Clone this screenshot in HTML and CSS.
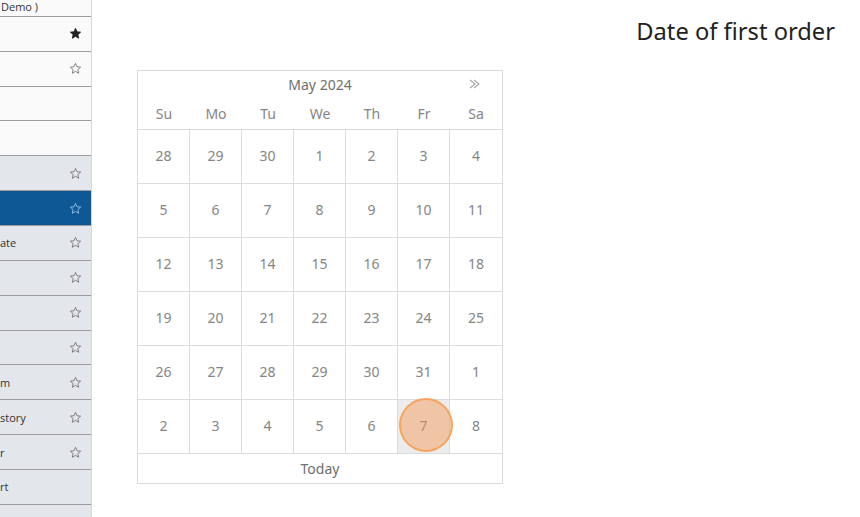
FILE: index.html
```html
<!DOCTYPE html>
<html lang="en">
<head>
  <meta charset="UTF-8">
  <title>Date of first order</title>
  <link rel="stylesheet" href="styles.css">
</head>
<body>
  <svg width="0" height="0" class="defs">
    <symbol id="star" viewBox="0 0 24 24">
      <polygon points="12,2.5 14.8,8.8 21.5,9.5 16.4,14 17.9,20.8 12,17.3 6.1,20.8 7.6,14 2.5,9.5 9.2,8.8"/>
    </symbol>
  </svg>

  <div class="layout">
    <!-- sidebar -->
    <aside class="sidebar">
      <div class="row light"><span class="label">Demo )</span></div>
      <div class="row light"><span class="label"></span><svg class="star filled"><use href="#star"/></svg></div>
      <div class="row light"><span class="label"></span><svg class="star"><use href="#star"/></svg></div>
      <div class="row light"><span class="label"></span></div>
      <div class="row light"><span class="label"></span></div>
      <div class="row"><span class="label"></span><svg class="star"><use href="#star"/></svg></div>
      <div class="row active"><span class="label"></span><svg class="star"><use href="#star"/></svg></div>
      <div class="row"><span class="label">ate</span><svg class="star"><use href="#star"/></svg></div>
      <div class="row"><span class="label"></span><svg class="star"><use href="#star"/></svg></div>
      <div class="row"><span class="label"></span><svg class="star"><use href="#star"/></svg></div>
      <div class="row"><span class="label"></span><svg class="star"><use href="#star"/></svg></div>
      <div class="row"><span class="label">m</span><svg class="star"><use href="#star"/></svg></div>
      <div class="row"><span class="label">story</span><svg class="star"><use href="#star"/></svg></div>
      <div class="row"><span class="label">r</span><svg class="star"><use href="#star"/></svg></div>
      <div class="row"><span class="label">rt</span></div>
      <div class="row"><span class="label"></span></div>
    </aside>

    <!-- main -->
    <main class="content">
      <div class="calendar">
        <div class="cal-title">
          <span>May 2024</span>
          <svg class="next" viewBox="0 0 14 12"><polyline points="2,2 7,6 2,10"/><polyline points="6,2 11,6 6,10"/></svg>
        </div>
        <div class="weekdays">
          <span>Su</span><span>Mo</span><span>Tu</span><span>We</span><span>Th</span><span>Fr</span><span>Sa</span>
        </div>
        <div class="days">
          <span>28</span><span>29</span><span>30</span><span>1</span><span>2</span><span>3</span><span>4</span>
          <span>5</span><span>6</span><span>7</span><span>8</span><span>9</span><span>10</span><span>11</span>
          <span>12</span><span>13</span><span>14</span><span>15</span><span>16</span><span>17</span><span>18</span>
          <span>19</span><span>20</span><span>21</span><span>22</span><span>23</span><span>24</span><span>25</span>
          <span>26</span><span>27</span><span>28</span><span>29</span><span>30</span><span>31</span><span>1</span>
          <span>2</span><span>3</span><span>4</span><span>5</span><span>6</span><span class="today">7<i class="click"></i></span><span>8</span>
        </div>
        <div class="cal-footer">Today</div>
      </div>

      <h2 class="field-title">Date of first order</h2>
    </main>
  </div>
</body>
</html>
```

FILE: styles.css
```css
/* global */
body {
  margin: 0;
  padding: 0;
  background-color: #fff;
  font-family: "Noto Sans", "Liberation Sans", sans-serif;
  color: #333;
  overflow: hidden;
}
.defs {
  position: absolute;
}
.layout {
  display: flex;
  height: 517px;
}

/* sidebar */
.sidebar {
  width: 91px;
  flex-shrink: 0;
  border-right: 1px solid #d8d8d8;
  margin-top: -18px;
  background-color: #e3e6ea;
}
.row {
  height: 33.86px;
  border-bottom: 1px solid #9c9c9c;
  display: flex;
  align-items: center;
  justify-content: space-between;
  padding-right: 9px;
  background-color: #e3e6ea;
  font-family: "Open Sans", "Liberation Sans", sans-serif;
  font-size: 11px;
  color: #333;
}
.row.light {
  background-color: #fafafa;
}
.row.active {
  background-color: #0e5896;
}
.row:first-child .label {
  align-self: flex-end;
  padding: 0 0 2px 1px;
  line-height: 14px;
}
.star {
  width: 13px;
  height: 13px;
  fill: none;
  stroke: #707070;
  stroke-width: 1.6;
  stroke-linejoin: round;
}
.star.filled {
  fill: #222;
  stroke: #222;
}
.row.active .star {
  stroke: #9fc8ec;
}

/* main area */
.content {
  flex: 1;
  display: flex;
  justify-content: space-between;
  align-items: flex-start;
  padding: 0 25px 0 45px;
}
.field-title {
  margin: 15px 0 0;
  font-size: 23.7px;
  font-weight: normal;
  color: #222;
}

/* calendar */
.calendar {
  margin-top: 70px;
  width: 364px;
  border: 1px solid #dcdcdc;
  color: #858585;
  font-size: 14px;
}
.cal-title {
  position: relative;
  height: 26px;
  display: flex;
  align-items: center;
  justify-content: center;
  color: #707070;
}
.cal-title .next {
  position: absolute;
  right: 20px;
  top: 7px;
  width: 14px;
  height: 12px;
  fill: none;
  stroke: #a8a8a8;
  stroke-width: 1.2;
}
.weekdays {
  display: grid;
  grid-template-columns: repeat(7, 52px);
  height: 32px;
  align-items: center;
  text-align: center;
}
.days {
  display: grid;
  grid-template-columns: repeat(7, 52px);
  border-top: 1px solid #dcdcdc;
}
.days span {
  position: relative;
  box-sizing: border-box;
  height: 54px;
  padding-bottom: 2px;
  border-right: 1px solid #dcdcdc;
  border-bottom: 1px solid #dcdcdc;
  display: flex;
  align-items: center;
  justify-content: center;
}
.days span:nth-child(7n) {
  border-right: none;
}
.days .today {
  background-color: #ececec;
}
.click {
  position: absolute;
  left: 1px;
  top: -2px;
  width: 50px;
  height: 50px;
  border-radius: 50%;
  border: 2px solid rgba(245, 160, 85, 0.9);
  background-color: rgba(244, 150, 80, 0.45);
}
.cal-footer {
  height: 29px;
  display: flex;
  align-items: center;
  justify-content: center;
  color: #707070;
}
```
